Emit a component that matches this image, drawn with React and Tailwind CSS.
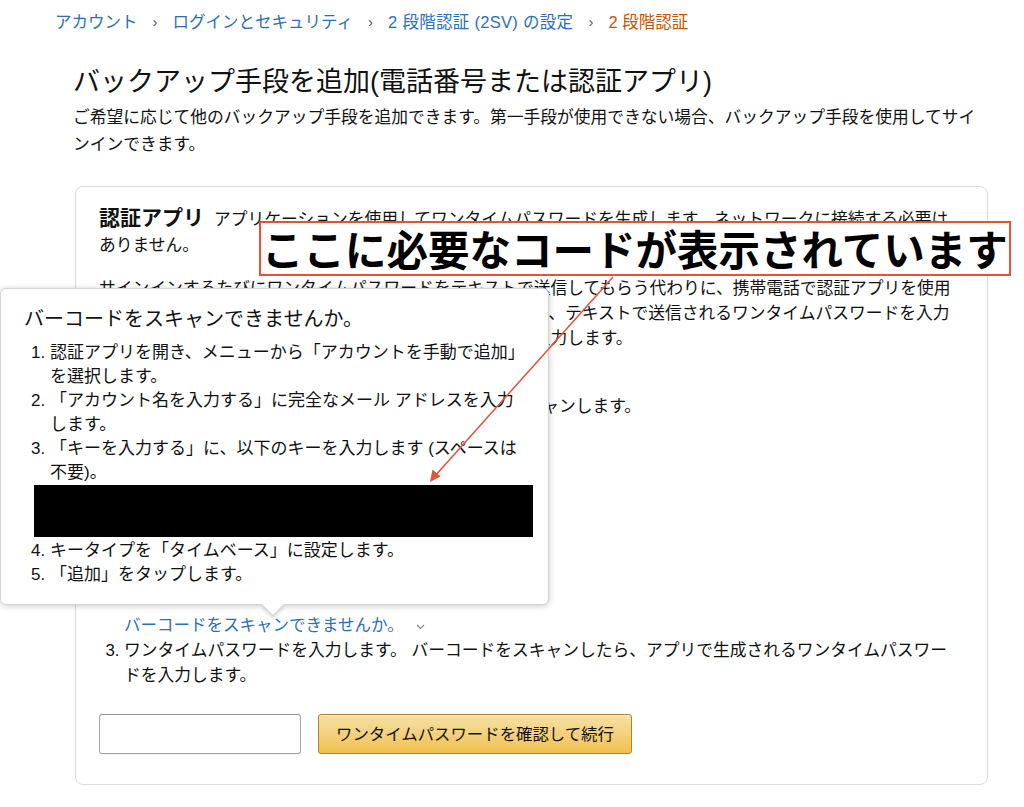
import React from "react";

const FONT = { fontFamily: '"Liberation Sans", "Noto Sans CJK JP", sans-serif' };

function Sep() {
  return <span className="mx-[15px] text-[15px] text-[#555]">›</span>;
}

export default function App() {
  return (
    <div className="relative w-[1024px] h-[807px] overflow-hidden bg-white text-[#111]" style={FONT}>
      {/* breadcrumb */}
      <div className="pt-[10px] pl-[55px] flex items-center text-[16.5px] leading-[24px]">
        <span className="text-[#2a6fb7]">アカウント</span>
        <Sep />
        <span className="text-[#2a6fb7]">ログインとセキュリティ</span>
        <Sep />
        <span className="text-[#2a6fb7] tracking-[0.3px]">2 段階認証 (2SV) の設定</span>
        <Sep />
        <span className="text-[#c45500]">2 段階認証</span>
      </div>

      <div className="pl-[73px]">
        <h1 className="mt-[30px] text-[27px] leading-[36px] font-normal">
          バックアップ手段を追加(電話番号または認証アプリ)
        </h1>
        <p className="mt-[4px] w-[912px] text-[16.75px] leading-[27px]">
          ご希望に応じて他のバックアップ手段を追加できます。第一手段が使用できない場合、バックアップ手段を使用してサインインできます。
        </p>

        {/* card */}
        <div className="mt-[28px] ml-[2px] w-[913px] border border-[#ddd] rounded-[8px] pl-[23px] pr-[30px] pt-[18px] pb-[30px]">
          <p className="text-[16.75px] leading-[26px]">
            <span className="font-bold text-[21px] leading-[26px] mr-[10px]">認証アプリ</span>
            アプリケーションを使用してワンタイムパスワードを生成します。ネットワークに接続する必要はありません。
          </p>
          <p className="mt-[17px] text-[16.75px] leading-[25px]">
            サインインするたびにワンタイムパスワードをテキストで送信してもらう代わりに、携帯電話で認証アプリを使用してワンタイムパスワードを生成できます。サインイン時に、テキストで送信されるワンタイムパスワードを入力する代わりに、アプリが生成するワンタイムパスワードを入力します。
          </p>
          <ol className="mt-[18px] list-decimal pl-[25px] text-[16.75px] leading-[25px]">
            <li>認証アプリをダウンロードします。</li>
            <li>
              お使いの認証アプリを使用して以下のバーコードをスキャンします。
              <div className="h-[194px]" />
              <div className="flex items-center text-[16.5px] text-[#2a6fb7]">
                バーコードをスキャンできませんか。
                <svg className="ml-[12px] mt-[3px]" width="9" height="6" viewBox="0 0 9 6">
                  <path d="M1 1 L4.5 4.5 L8 1" fill="none" stroke="#8a8a8a" strokeWidth="1.2" />
                </svg>
              </div>
            </li>
            <li>
              ワンタイムパスワードを入力します。 バーコードをスキャンしたら、アプリで生成されるワンタイムパスワードを入力します。
            </li>
          </ol>
          <div className="mt-[26px] flex gap-[17px]">
            <input
              type="text"
              className="w-[202px] h-[40px] border border-[#a6a6a6] border-t-[#949494] rounded-[3px] shadow-[inset_0_1px_0_rgba(255,255,255,0.5),0_1px_0_rgba(0,0,0,0.07)] outline-none"
            />
            <button className="w-[314px] h-[40px] rounded-[3px] border border-[#a88734] bg-gradient-to-b from-[#f7dfa5] to-[#f0c14b] text-[16.4px] text-[#111] shadow-[inset_0_1px_0_rgba(255,255,255,0.4)]">
              ワンタイムパスワードを確認して続行
            </button>
          </div>
        </div>
      </div>

      {/* popover */}
      <div className="absolute left-0 top-[288px] w-[549px] bg-white border border-[#d4d4d4] rounded-[6px] shadow-[0_1px_6px_rgba(0,0,0,0.22)] pl-[23px] pr-[23px] pt-[16px] pb-[17px]">
        <div className="text-[20px] leading-[28px]">バーコードをスキャンできませんか。</div>
        <ol className="mt-[8px] list-decimal pl-[26px] text-[17px] leading-[24px] whitespace-nowrap">
          <li>認証アプリを開き、メニューから「アカウントを手動で追加」<br />を選択します。</li>
          <li>「アカウント名を入力する」に完全なメール アドレスを入力<br />します。</li>
          <li>「キーを入力する」に、以下のキーを入力します (スペースは<br />不要)。</li>
        </ol>
        <div className="ml-[10px] w-[499px] h-[52px] bg-black" />
        <ol start={4} className="mt-[2px] list-decimal pl-[26px] text-[17px] leading-[24px] whitespace-nowrap">
          <li>キータイプを「タイムベース」に設定します。</li>
          <li>「追加」をタップします。</li>
        </ol>
        <div className="absolute left-[264px] bottom-[-9px] w-[16px] h-[16px] bg-white rotate-45 border-r border-b border-[#d4d4d4] shadow-[2px_2px_3px_rgba(0,0,0,0.12)]" />
      </div>

      {/* annotation */}
      <div className="absolute left-[259px] top-[221px] w-[752px] h-[55px] border-2 border-[#e2533c] bg-white flex items-center justify-center">
        <span className="font-bold text-[41.5px] leading-none text-black whitespace-nowrap" style={{ fontFamily: '"Noto Sans CJK JP", sans-serif' }}>
          ここに必要なコードが表示されています
        </span>
      </div>

      <svg className="absolute left-0 top-0 pointer-events-none" width="1024" height="807" viewBox="0 0 1024 807">
        <line x1="613" y1="277" x2="435" y2="476" stroke="#e2533c" strokeWidth="1.6" />
        <path d="M430 482 L432.5 469.5 L440.5 476.5 Z" fill="#e2533c" />
      </svg>
    </div>
  );
}
